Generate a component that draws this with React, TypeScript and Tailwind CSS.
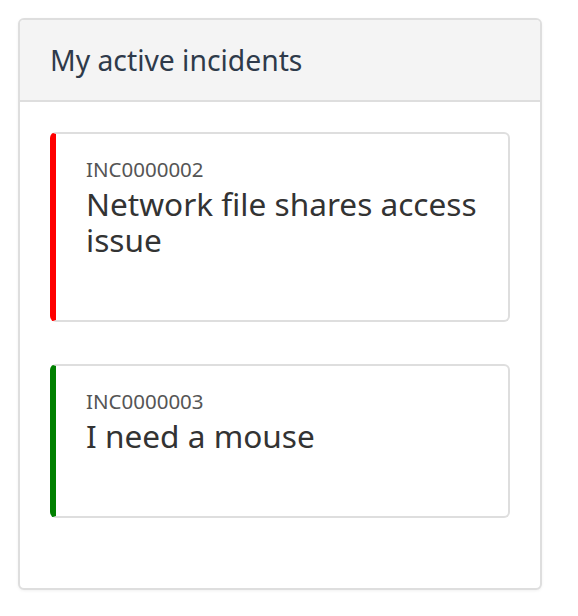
import React from "react";

const incidents = [
  { id: "INC0000002", title: "Network file shares access issue", color: "border-l-[#ff0000]" },
  { id: "INC0000003", title: "I need a mouse", color: "border-l-[#008000]" },
];

export default function App() {
  return (
    <div className="min-h-[616px] bg-white p-[18px]" style={{ fontFamily: "'Noto Sans', 'Open Sans', sans-serif" }}>
      <div className="w-[524px] rounded-[6px] border-2 border-[#dedede] bg-white shadow-[0_1px_3px_rgba(0,0,0,0.06)] overflow-hidden">
        <div className="flex h-[82px] items-center border-b-2 border-[#dedede] bg-[#f4f4f4] px-[30px]">
          <h2 className="text-[28.3px] leading-[34px] text-[#2e3a4a]">My active incidents</h2>
        </div>
        <div className="flex flex-col gap-[42px] px-[30px] pt-[30px] pb-[70px]">
          {incidents.map((inc) => (
            <div
              key={inc.id}
              className={`rounded-[6px] border-2 border-[#dedede] border-l-[6px] ${inc.color} bg-white pl-[30px] pr-[16px] pt-[23px] pb-[62px]`}
            >
              <div className="text-[20.5px] leading-[24px] text-[#555555]">{inc.id}</div>
              <div className="mt-[5px] text-[31.6px] leading-[36px] text-[#333333]">{inc.title}</div>
            </div>
          ))}
        </div>
      </div>
    </div>
  );
}
